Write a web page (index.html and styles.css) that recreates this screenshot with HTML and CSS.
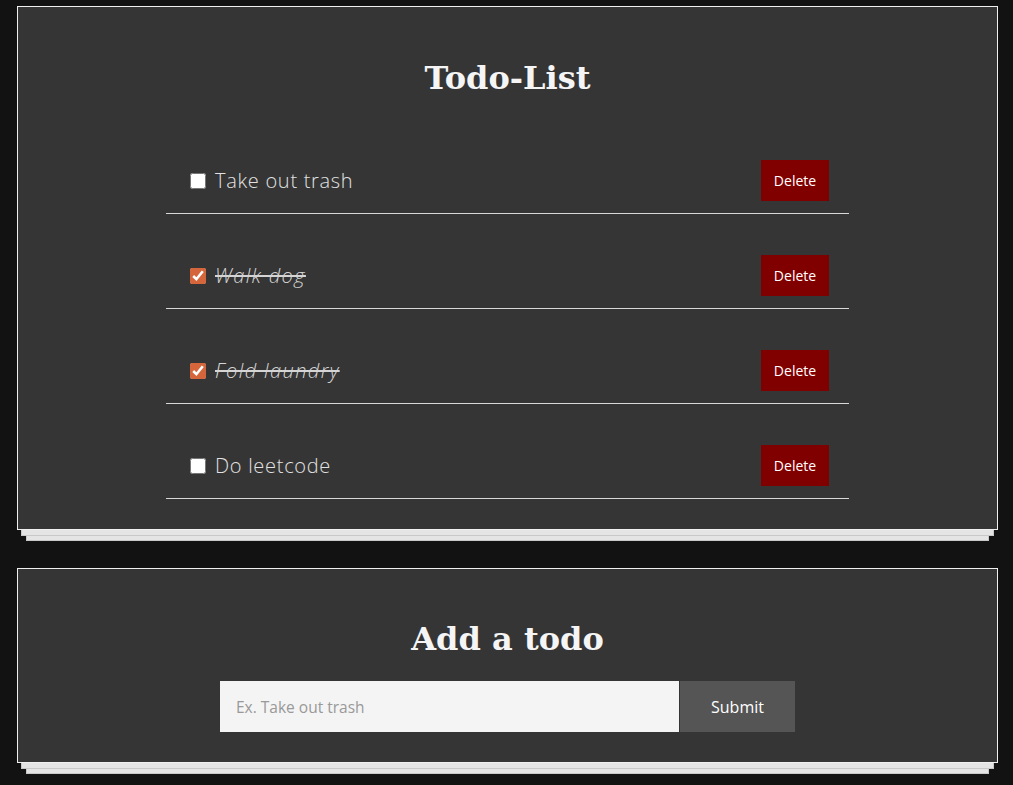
FILE: index.html
```html
<!DOCTYPE html>
<html lang="en">
<head>
<meta charset="utf-8">
<title>Todo-List</title>
<link rel="stylesheet" href="styles.css">
</head>
<body>
<main class="page">
  <section class="card card-list">
    <h1 class="card-title">Todo-List</h1>
    <ul class="todos">
      <li class="todo">
        <label class="todo-label">
          <input type="checkbox" class="todo-check">
          <span class="todo-text">Take out trash</span>
        </label>
        <button class="btn-delete" type="button">Delete</button>
      </li>
      <li class="todo done">
        <label class="todo-label">
          <input type="checkbox" class="todo-check" checked>
          <span class="todo-text">Walk dog</span>
        </label>
        <button class="btn-delete" type="button">Delete</button>
      </li>
      <li class="todo done">
        <label class="todo-label">
          <input type="checkbox" class="todo-check" checked>
          <span class="todo-text">Fold laundry</span>
        </label>
        <button class="btn-delete" type="button">Delete</button>
      </li>
      <li class="todo">
        <label class="todo-label">
          <input type="checkbox" class="todo-check">
          <span class="todo-text">Do leetcode</span>
        </label>
        <button class="btn-delete" type="button">Delete</button>
      </li>
    </ul>
  </section>

  <section class="card card-add">
    <h1 class="card-title">Add a todo</h1>
    <form class="add-form">
      <input class="add-input" type="text" placeholder="Ex. Take out trash">
      <button class="add-submit" type="button">Submit</button>
    </form>
  </section>
</main>
</body>
</html>
```

FILE: styles.css
```css
html, body {
  margin: 0;
  padding: 0;
  background: #121212;
}

.page {
  display: flex;
  flex-direction: column;
  gap: 38px;
  padding: 6px 15px 22px 17px;
}

.card {
  background: #353535;
  border: 1px solid #f0f0f0;
  box-shadow:
    0 10px 0 -5px #e4e4e4,
    0 10px 0 -4px #c8c8c8,
    0 20px 0 -10px #e4e4e4,
    0 20px 0 -9px #c8c8c8;
}

.card-list {
  padding: 51px 0 30px;
}

.card-add {
  padding: 50px 0 30px;
}

.card-title {
  margin: 0;
  font-family: "DejaVu Serif", serif;
  font-weight: bold;
  font-size: 32px;
  line-height: 40px;
  color: #f5f5f5;
  text-align: center;
}

.todos {
  list-style: none;
  margin: 21px auto 0;
  padding: 0;
  width: 683px;
}

.todo {
  display: flex;
  align-items: center;
  justify-content: space-between;
  padding: 41px 20px 12px 24px;
  border-bottom: 1px solid #d8d8d8;
}

.todo-label {
  display: flex;
  align-items: center;
  gap: 9px;
}

.todo-check {
  width: 16px;
  height: 16px;
  margin: 0;
  accent-color: #d5663c;
}

.todo-text {
  font-family: "Open Sans", sans-serif;
  font-weight: 300;
  font-size: 20px;
  letter-spacing: 0.7px;
  color: #e2e2e2;
}

.done .todo-text {
  font-style: italic;
  text-decoration: line-through;
  letter-spacing: 1.4px;
  color: #d4d4d4;
}

.btn-delete {
  width: 68px;
  height: 41px;
  border: none;
  background: #800000;
  color: #ffffff;
  font-family: "Open Sans", sans-serif;
  font-size: 14px;
  padding: 0;
}

.add-form {
  display: flex;
  justify-content: center;
  gap: 1px;
  margin: 22px 0 0;
}

.add-input {
  width: 459px;
  height: 51px;
  box-sizing: border-box;
  border: none;
  background: #f4f4f4;
  padding: 0 16px;
  font-family: "Open Sans", sans-serif;
  font-size: 15.5px;
  color: #333;
  outline: none;
}

.add-input::placeholder {
  color: #999;
}

.add-submit {
  width: 115px;
  height: 51px;
  border: none;
  background: #555555;
  color: #ffffff;
  font-family: "Open Sans", sans-serif;
  font-size: 16px;
  padding: 0;
}
```
